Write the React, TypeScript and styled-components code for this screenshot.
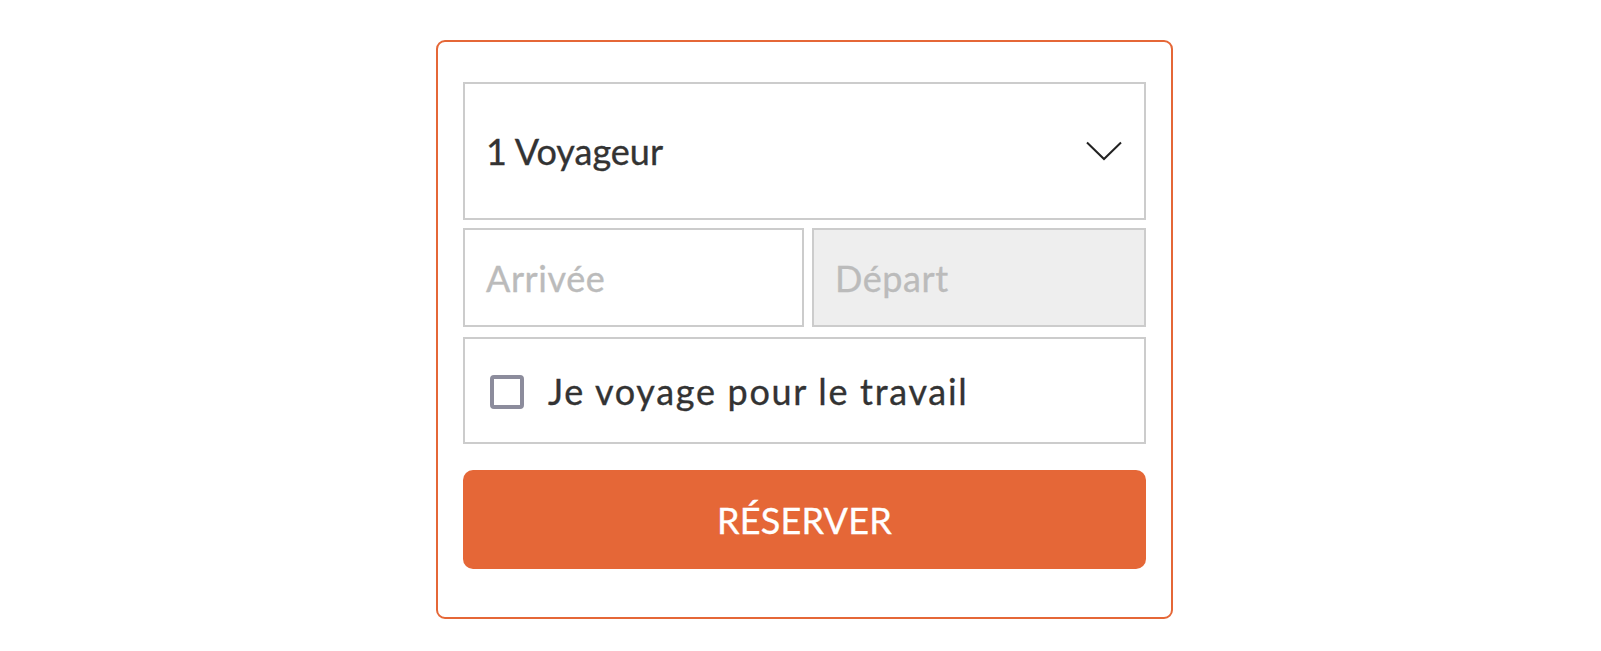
import React from "react";
import styled, { createGlobalStyle } from "styled-components";

const GlobalStyle = createGlobalStyle`
  html, body {
    margin: 0;
    padding: 0;
    background: #ffffff;
  }
  body {
    font-family: Lato, "Open Sans", "Liberation Sans", sans-serif;
  }
  * {
    box-sizing: border-box;
  }
`;

const orange = "#e56737";
const fieldBorder = "#cccccc";

const Page = styled.div`
  display: flex;
  justify-content: center;
  padding: 40px 0 32px 8px;
`;

const Card = styled.form`
  width: 737px;
  border: 2px solid ${orange};
  border-radius: 9px;
  padding: 40px 25px 48px;
  display: flex;
  flex-direction: column;
`;

const Field = styled.div<{ $height: number; $muted?: boolean }>`
  height: ${(p) => p.$height}px;
  border: 2px solid ${fieldBorder};
  background: ${(p) => (p.$muted ? "#eeeeee" : "#ffffff")};
  display: flex;
  align-items: center;
  padding: 0 22px 0 21px;
  font-size: 36px;
  color: #333333;
  -webkit-text-stroke: 0.35px currentColor;
`;

const SelectField = styled(Field)`
  justify-content: space-between;
`;

const Placeholder = styled.span`
  color: #bbbbbb;
  letter-spacing: 0.6px;
`;

const DatesRow = styled.div`
  display: grid;
  grid-template-columns: 341px 1fr;
  column-gap: 8px;
  margin-top: 8px;
`;

const CheckRow = styled(Field)`
  margin-top: 10px;
  padding-left: 25px;
  gap: 24px;
`;

const CheckLabel = styled.span`
  letter-spacing: 1.7px;
`;

const CheckBox = styled.span`
  width: 34px;
  height: 34px;
  border: 4px solid #8c8c9c;
  border-radius: 4px;
  flex-shrink: 0;
  margin-top: 2px;
`;

const SubmitButton = styled.button`
  margin-top: 26px;
  height: 99px;
  border: none;
  border-radius: 10px;
  background: ${orange};
  color: #ffffff;
  font-family: Lato, "Open Sans", "Liberation Sans", sans-serif;
  font-size: 36px;
  letter-spacing: 0.2px;
  -webkit-text-stroke: 0.35px currentColor;
  cursor: pointer;
`;

function Chevron() {
  return (
    <svg width="36" height="20" viewBox="0 0 36 20" fill="none">
      <path d="M1 1.5 L18 18 L35 1.5" stroke="#222" strokeWidth="2" />
    </svg>
  );
}

export default function App() {
  return (
    <Page>
      <GlobalStyle />
      <Card onSubmit={(e) => e.preventDefault()}>
        <SelectField $height={138}>
          <span>1 Voyageur</span>
          <Chevron />
        </SelectField>
        <DatesRow>
          <Field $height={99}>
            <Placeholder>Arrivée</Placeholder>
          </Field>
          <Field $height={99} $muted>
            <Placeholder>Départ</Placeholder>
          </Field>
        </DatesRow>
        <CheckRow $height={107}>
          <CheckBox />
          <CheckLabel>Je voyage pour le travail</CheckLabel>
        </CheckRow>
        <SubmitButton type="submit">RÉSERVER</SubmitButton>
      </Card>
    </Page>
  );
}
